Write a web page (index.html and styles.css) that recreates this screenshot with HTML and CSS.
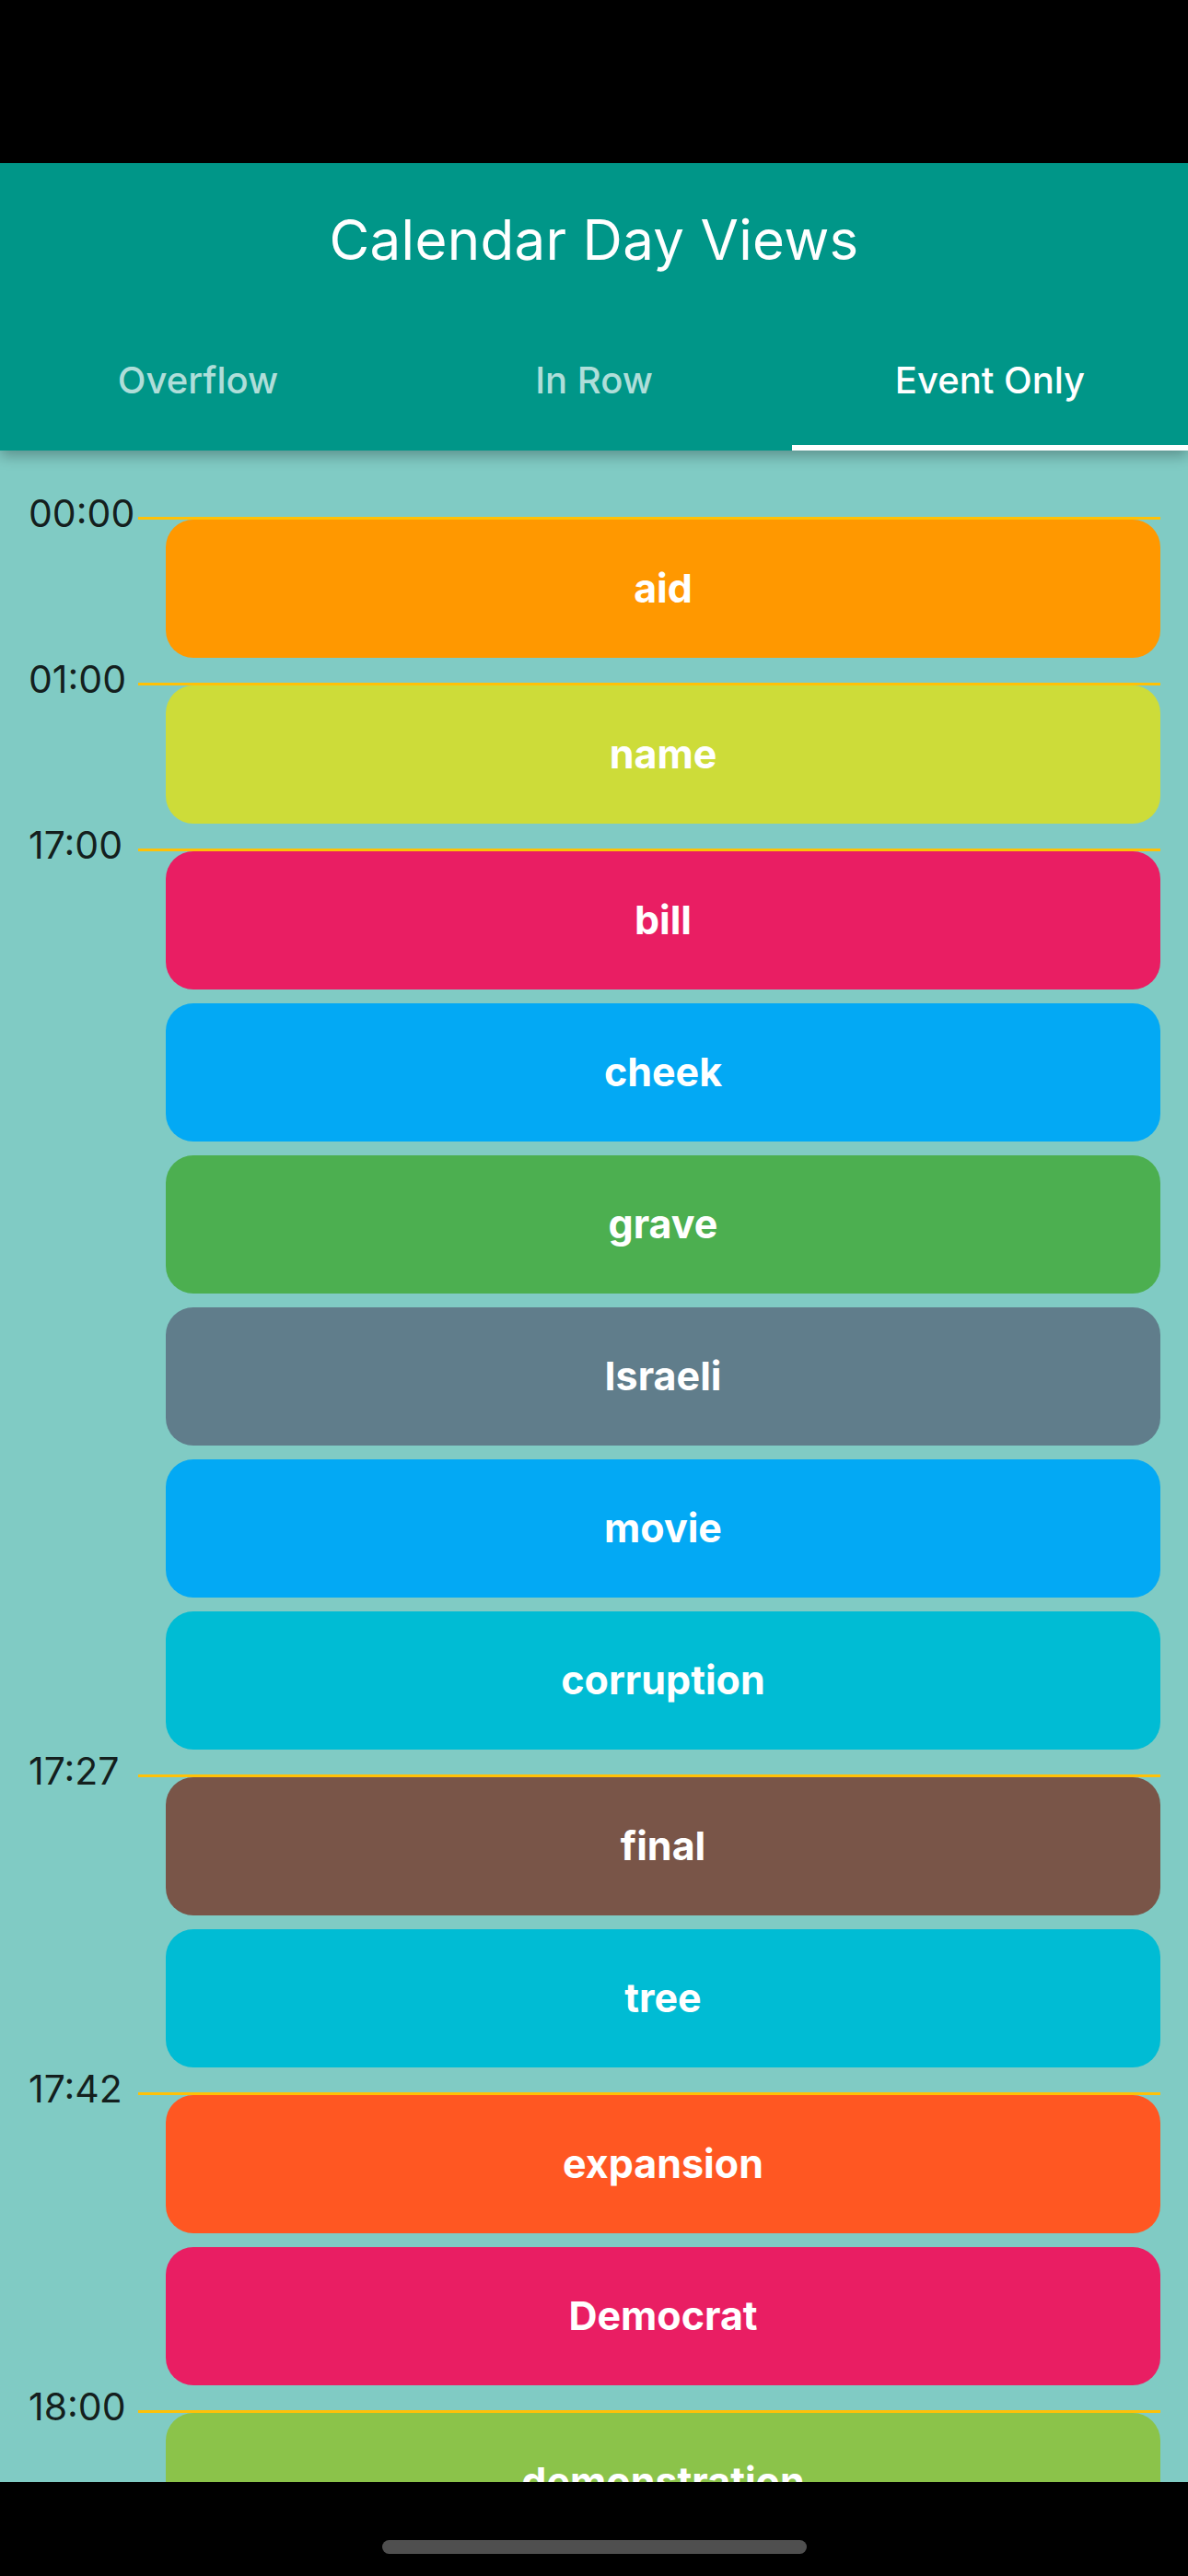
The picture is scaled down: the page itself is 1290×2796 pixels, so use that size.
FILE: index.html
```html
<!DOCTYPE html>
<html lang="en">
<head>
<meta charset="utf-8">
<title>Calendar Day Views</title>
<link rel="stylesheet" href="styles.css">
</head>
<body>
<div class="screen">
  <div class="status-bar"></div>
  <header class="app-bar">
    <div class="toolbar"><h1 class="title">Calendar Day Views</h1></div>
    <nav class="tabs">
      <div class="tab">Overflow</div>
      <div class="tab">In Row</div>
      <div class="tab active">Event Only</div>
    </nav>
  </header>
  <main class="day">
    <section class="slot">
      <div class="time"><span>00:00</span></div>
      <div class="track">
        <div class="event orange">aid</div>
      </div>
    </section>
    <section class="slot">
      <div class="time"><span>01:00</span></div>
      <div class="track">
        <div class="event lime">name</div>
      </div>
    </section>
    <section class="slot">
      <div class="time"><span>17:00</span></div>
      <div class="track">
        <div class="event pink">bill</div>
        <div class="event light-blue">cheek</div>
        <div class="event green">grave</div>
        <div class="event blue-grey">Israeli</div>
        <div class="event light-blue">movie</div>
        <div class="event cyan">corruption</div>
      </div>
    </section>
    <section class="slot">
      <div class="time"><span>17:27</span></div>
      <div class="track">
        <div class="event brown">final</div>
        <div class="event cyan">tree</div>
      </div>
    </section>
    <section class="slot">
      <div class="time"><span>17:42</span></div>
      <div class="track">
        <div class="event deep-orange">expansion</div>
        <div class="event pink">Democrat</div>
      </div>
    </section>
    <section class="slot">
      <div class="time"><span>18:00</span></div>
      <div class="track">
        <div class="event light-green">demonstration</div>
      </div>
    </section>
  </main>
  <div class="nav-bar"><div class="home-indicator"></div></div>
</div>
</body>
</html>
```
FILE: styles.css
```css
* { box-sizing: border-box; }

html, body {
  margin: 0;
  padding: 0;
  background: #000;
}

body {
  width: 1290px;
  height: 2796px;
  overflow: hidden;
  font-family: "Inter", "Roboto", "Liberation Sans", sans-serif;
}

.screen {
  display: flex;
  flex-direction: column;
  width: 1290px;
  height: 2796px;
}

.status-bar {
  height: 177px;
  flex: none;
  background: #000;
}

.app-bar {
  position: relative;
  z-index: 2;
  flex: none;
  background: #009688;
  box-shadow: 0 6px 14px rgba(0, 0, 0, 0.28);
}

.toolbar {
  height: 168px;
  display: flex;
  align-items: center;
  justify-content: center;
}

.title {
  margin: 0;
  color: #fff;
  font-size: 60px;
  font-weight: 400;
  letter-spacing: 0.3px;
  padding-bottom: 2px;
}

.tabs {
  display: grid;
  grid-template-columns: repeat(3, 1fr);
  height: 144px;
}

.tab {
  display: flex;
  align-items: center;
  justify-content: center;
  color: rgba(255, 255, 255, 0.7);
  font-size: 40px;
  font-weight: 500;
  border-bottom: 6px solid transparent;
  padding-bottom: 4px;
}

.tab.active {
  color: #fff;
  border-bottom-color: #fff;
}

.day {
  flex: 1;
  min-height: 0;
  overflow: hidden;
  background: #80cbc4;
  padding-top: 72px;
}

.slot {
  display: flex;
  padding-bottom: 27px;
}

.time {
  width: 150px;
  flex: none;
}

.time span {
  display: block;
  margin-top: -29px;
  padding-left: 31px;
  font-size: 41px;
  line-height: 50px;
  color: rgba(0, 0, 0, 0.87);
}

.track {
  flex: 1;
  margin-right: 30px;
  padding-left: 30px;
  border-top: 3px solid #ffc107;
  display: flex;
  flex-direction: column;
  gap: 15px;
}

.event {
  height: 150px;
  border-radius: 30px;
  display: flex;
  align-items: center;
  justify-content: center;
  color: #fff;
  font-size: 43px;
  font-weight: 700;
  padding-bottom: 3px;
}

.orange { background: #ff9800; }
.lime { background: #cddc39; }
.pink { background: #e91e63; }
.light-blue { background: #03a9f4; }
.green { background: #4caf50; }
.blue-grey { background: #607d8b; }
.cyan { background: #00bcd4; }
.brown { background: #795548; }
.deep-orange { background: #ff5722; }
.light-green { background: #8bc34a; }

.nav-bar {
  height: 102px;
  flex: none;
  background: #000;
  display: flex;
  justify-content: center;
  padding-top: 63px;
}

.home-indicator {
  width: 461px;
  height: 15px;
  border-radius: 8px;
  background: #4f4f4f;
}
```
